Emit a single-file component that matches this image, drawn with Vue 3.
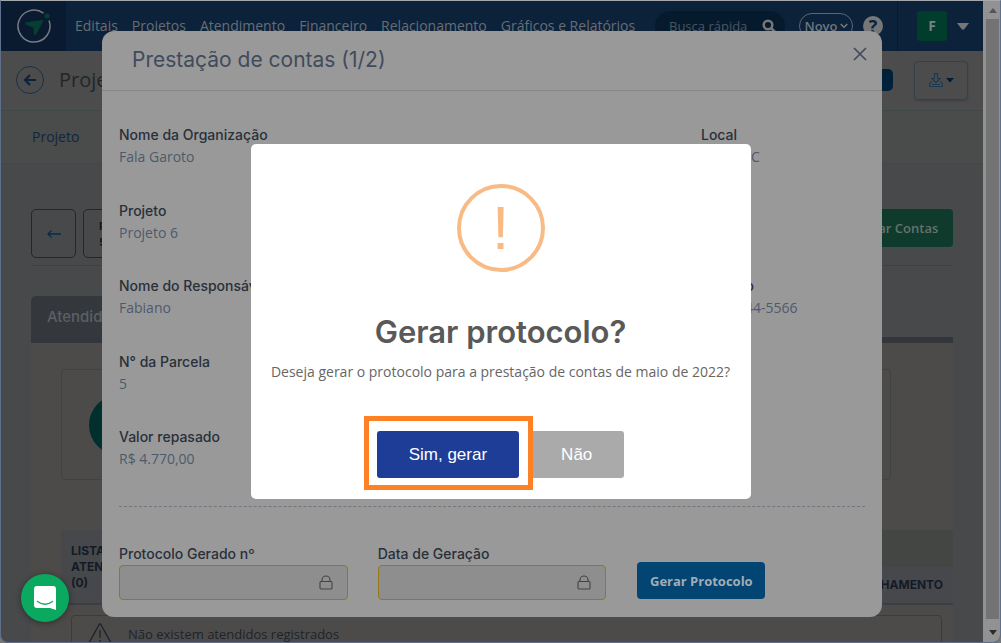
<script setup>
const menu = ['Editais', 'Projetos', 'Atendimento', 'Financeiro', 'Relacionamento', 'Gráficos e Relatórios']

const details = [
  [{ label: 'Nome da Organização', value: 'Fala Garoto' }, { label: 'Local', value: 'Lages/SC' }],
  [{ label: 'Projeto', value: 'Projeto 6' }],
  [{ label: 'Nome do Responsável', value: 'Fabiano' }, { label: 'Contato', value: '(11) 3344-5566' }],
  [{ label: 'N° da Parcela', value: '5' }],
  [{ label: 'Valor repasado', value: 'R$ 4.770,00' }],
]

const fields = [
  { id: 'protocolo', label: 'Protocolo Gerado nº' },
  { id: 'data', label: 'Data de Geração' },
]
</script>

<template>
  <div class="window">
    <div class="page">
      <header class="topbar">
        <a href="#" class="logo" aria-label="Início">
          <svg width="36" height="36" viewBox="0 0 36 36">
            <path d="M27.5 5.2A16 16 0 1 0 33 12.500" fill="none" stroke="#777b80" stroke-width="1.500" />
            <path d="M9.500 14.500 26 12Q27.500 12 27 13.500L20 26.500Q18.500 28 18 26L17.500 19.500 11 17Q8.500 16 9.500 14.500Z" fill="#063f31" />
            <circle cx="31" cy="8" r="2.500" fill="#063f31" />
          </svg>
        </a>
        <nav class="menu">
          <a v-for="item in menu" :key="item" href="#">{{ item }}</a>
        </nav>
        <div class="search">
          <input type="text" placeholder="Busca rápida" aria-label="Busca rápida" />
          <svg width="14" height="14" viewBox="0 0 14 14" fill="none" stroke="#777" stroke-width="2.500">
            <circle cx="6" cy="6" r="4.300" />
            <path d="M9 9l4 4" />
          </svg>
        </div>
        <button class="new">Novo
          <svg width="8" height="6" viewBox="0 0 8 6" fill="none" stroke="#777" stroke-width="1.500"><path d="M.7 1 4 4.300 7.300 1" /></svg>
        </button>
        <button class="help">?</button>
        <div class="account">
          <span class="avatar">F</span>
          <svg width="12" height="7" viewBox="0 0 12 7"><path d="M0 0h12L7 6.500H5Z" fill="#777" /></svg>
        </div>
      </header>

      <div class="titlebar">
        <button class="back" aria-label="Voltar">
          <svg width="14" height="12" viewBox="0 0 14 12" fill="none" stroke="#0c223b" stroke-width="2.200"><path d="M13 6H2M7 1 2 6l5 5" /></svg>
        </button>
        <h1>Projeto</h1>
        <span class="status"></span>
        <button class="download" aria-label="Baixar">
          <svg width="14" height="14" viewBox="0 0 14 14" fill="none" stroke="#1d3853" stroke-width="1.200"><path d="M5.500.5h3v5H11L7 9.500 3 5.500h2.500ZM3.500 9H2L.5 11v2.500h13V11L12 9h-1.500M3 11.500h8" /></svg>
          <svg width="8" height="5" viewBox="0 0 8 5"><path d="M0 0h8L4 4.500Z" fill="#001d38" /></svg>
        </button>
      </div>

      <nav class="tabs"><a href="#">Projeto</a></nav>

      <main class="content">
        <div class="toolbar">
          <button class="tool arrow" aria-label="Anterior">
            <svg width="14" height="8" viewBox="0 0 14 8" fill="none" stroke="#0b2a4b" stroke-width="1.300"><path d="M14 4H1M4.500.5 1 4l3.500 3.500" /></svg>
          </button>
          <button class="tool step">Parcela<br />5</button>
          <button class="report">Prestar Contas</button>
        </div>

        <div class="tabhead"><a href="#">Atendidos</a></div>
        <section class="panel">
          <div class="summary"><span class="dot"></span></div>
          <table>
            <tbody>
              <tr>
                <th rowspan="2" class="list">LISTA DE<br />ATENDIDOS<br />(0)</th>
                <th class="band"></th>
              </tr>
              <tr><th class="follow">ACOMPANHAMENTO</th></tr>
            </tbody>
          </table>
          <div class="empty">
            <svg width="24" height="22" viewBox="0 0 24 22" fill="none" stroke="#1d222a" stroke-width="1.300"><path d="M12 1Q12.700 1 13 1.700L23 20Q23 21 22 21H2Q1 21 1 20L11 1.700Q11.300 1 12 1ZM12 7v8M12 17v2" /></svg>
            Não existem atendidos registrados
          </div>
        </section>
      </main>
    </div>

    <div class="scrollbar">
      <svg width="8" height="5" viewBox="0 0 8 5"><path d="M4 0l4 5H0Z" fill="#555" /></svg>
      <span class="thumb"></span>
      <svg width="8" height="5" viewBox="0 0 8 5"><path d="M0 0h8L4 5Z" fill="#2b2b2b" /></svg>
    </div>

    <div class="modal-layer">
      <section class="modal">
        <header class="modal-head">
          <h2>Prestação de contas (1/2)</h2>
          <button class="close" aria-label="Fechar">
            <svg width="14" height="14" viewBox="0 0 14 14" fill="none" stroke="#414b5c" stroke-width="1.700"><path d="M1 1l12 12M13 1 1 13" /></svg>
          </button>
        </header>
        <div class="modal-body">
          <div class="details">
            <div v-for="(row, i) in details" :key="i" class="row">
              <dl v-for="d in row" :key="d.label">
                <dt>{{ d.label }}</dt>
                <dd>{{ d.value }}</dd>
              </dl>
            </div>
          </div>
          <hr />
          <form class="protocol" @submit.prevent>
            <div v-for="f in fields" :key="f.id" class="field">
              <label :for="f.id">{{ f.label }}</label>
              <div class="box">
                <input :id="f.id" type="text" readonly />
                <svg width="14" height="15" viewBox="0 0 14 15" fill="none" stroke="#444" stroke-width="1.100"><rect x="1" y="6.500" width="12" height="7.500" rx="1" /><path d="M3 6.500V5a4 4 0 0 1 8 0v1.500" /></svg>
              </div>
            </div>
            <div class="field action"><button class="generate" type="button">Gerar Protocolo</button></div>
          </form>
        </div>
      </section>
    </div>

    <div class="alert-layer">
      <section class="alert" role="alertdialog" aria-labelledby="alert-title">
        <div class="mark">!</div>
        <h2 id="alert-title">Gerar protocolo?</h2>
        <p>Deseja gerar o protocolo para a prestação de contas de maio de 2022?</p>
        <div class="choices">
          <div class="highlight"><button class="yes">Sim, gerar</button></div>
          <button class="no">Não</button>
        </div>
      </section>
    </div>

    <button class="chat" aria-label="Abrir chat">
      <svg width="22" height="24" viewBox="0 0 22 24"><path d="M3 0h16q3 0 3 3v21l-6-2H3q-3 0-3-3V3q0-3 3-3Z" fill="#fff" /><path d="M3.500 15.500q7.500 5.500 15 0" fill="none" stroke="#0ba95f" stroke-width="1.300" stroke-linecap="round" /></svg>
    </button>
  </div>
</template>

<style>
body {
  margin: 0;
  background: #777;
}
</style>

<style scoped>
* {
  box-sizing: border-box;
}
a {
  color: inherit;
  text-decoration: none;
}
button {
  font: inherit;
  padding: 0;
  border: 0;
}
h1, h2, p, dl, dd {
  margin: 0;
}
svg {
  flex: none;
}
.window {
  position: relative;
  display: grid;
  grid-template-columns: minmax(0, 1fr) 17px;
  height: 100vh;
  overflow: hidden;
  border: 1px solid #5e6f8c;
  border-top-color: #a4a8ab;
  border-radius: 0 0 8px 8px;
  background: #48494b;
  font: 14px/20px "Open Sans", "Noto Sans", sans-serif;
}
.page {
  overflow: hidden;
}
.topbar {
  display: flex;
  align-items: center;
  height: 50px;
  background: #0c223b;
  color: #686d72;
}
.logo {
  display: flex;
  align-items: center;
  justify-content: center;
  align-self: stretch;
  width: 65px;
  background: #0a1b31;
}
.menu {
  display: flex;
  gap: 14px;
  padding-left: 9px;
  white-space: nowrap;
}
.search {
  display: flex;
  align-items: center;
  width: 130px;
  height: 30px;
  margin-left: auto;
  padding: 0 9px 0 14px;
  border-radius: 15px;
  background: #061a2e;
}
.search input {
  flex: 1;
  min-width: 0;
  padding: 0;
  border: 0;
  background: none;
  font: inherit;
  font-size: 13px;
}
.search input::placeholder {
  color: #4a5662;
  opacity: 1;
}
.new {
  display: flex;
  align-items: center;
  justify-content: center;
  gap: 2px;
  width: 54px;
  height: 26px;
  margin: 0 10px 0 14px;
  border: 1px solid #5d6670;
  border-radius: 13px;
  background: none;
  color: #70757a;
  font-size: 13px;
  font-weight: 600;
}
.help {
  width: 20px;
  height: 20px;
  margin-right: 14px;
  border-radius: 50%;
  background: #777;
  color: #0c223b;
  font-size: 18px;
  font-weight: 700;
}
.account {
  display: flex;
  align-items: center;
  gap: 10px;
  align-self: stretch;
  padding: 0 14px 0 19px;
  border-left: 1px solid #081a2e;
}
.avatar {
  width: 30px;
  height: 30px;
  border-radius: 3px;
  background: #003d2c;
  color: #75837c;
  font-weight: 700;
  line-height: 30px;
  text-align: center;
}
.titlebar {
  display: flex;
  align-items: center;
  height: 60px;
  padding: 0 15px 1px;
  border-bottom: 1px solid #40484a;
  background: #4c4c4c;
}
.back {
  display: flex;
  align-items: center;
  justify-content: center;
  width: 28px;
  height: 28px;
  border: 1px solid #17304b;
  border-radius: 50%;
  background: none;
}
h1 {
  margin-left: 15px;
  color: #22262b;
  font-size: 20px;
  font-weight: 400;
}
.status {
  width: 80px;
  height: 22px;
  margin: 0 21px 0 auto;
  border-radius: 5px;
  background: #00213a;
}
.download {
  display: flex;
  align-items: center;
  justify-content: center;
  gap: 3px;
  width: 54px;
  height: 39px;
  border: 1px solid #35404c;
  border-radius: 4px;
  background: none;
  box-shadow: 0 1px 2px #3b3f44;
}
.tabs {
  height: 53px;
  padding: 16px 31px;
  border-bottom: 1px solid #40484a;
  background: #4a4b4b;
  color: #10263e;
}
.content {
  padding: 45px 30px 0;
}
.toolbar {
  display: flex;
  align-items: flex-start;
  gap: 7px;
  height: 57px;
  border-bottom: 1px solid #3b4346;
}
.tool {
  display: flex;
  align-items: center;
  justify-content: center;
  width: 45px;
  height: 49px;
  border: 1px solid #23272d;
  border-radius: 5px;
  background: none;
}
.step {
  width: 80px;
  padding-left: 15px;
  justify-content: flex-start;
  color: #14171b;
  font: 700 11px/16px Inter, sans-serif;
  text-align: left;
}
.report {
  width: 122px;
  height: 38px;
  margin-left: auto;
  border-radius: 4px;
  background: #0f3b2c;
  color: #66716c;
  font-size: 13px;
  font-weight: 600;
}
.tabhead {
  display: flex;
  margin-top: 30px;
  border-bottom: 6px solid #34363d;
}
.tabhead a {
  width: 130px;
  height: 41px;
  padding: 11px 16px;
  border-radius: 5px 0 0;
  background: #34383d;
  color: #5c5f63;
  font: 500 15px/20px Inter, sans-serif;
}
.panel {
  padding-top: 26px;
  background: #4c4b4a;
}
.summary {
  height: 111px;
  margin: 0 62px 0 30px;
  padding: 25px 27px;
  border: 1px solid #3d4442;
  border-radius: 4px;
}
.dot {
  display: block;
  width: 60px;
  height: 60px;
  border-radius: 50%;
  background: #00302d;
}
table {
  width: calc(100% - 30px);
  margin: 50px 0 0 30px;
  border-collapse: collapse;
  border-bottom: 2px solid #3a3f42;
  color: #141b26;
  font: 700 12px/16px Inter, sans-serif;
}
th {
  height: 37px;
  padding: 0 10px;
  background: #46484b;
}
.list {
  text-align: left;
}
.band {
  background: #444644;
}
.follow {
  text-align: right;
}
.empty {
  display: flex;
  align-items: center;
  gap: 16px;
  height: 38px;
  margin: 10px 11px 0 40px;
  padding-left: 16px;
  border: 1px solid #393c3e;
  border-radius: 4px;
  color: #1e232a;
  font-size: 13px;
}
.scrollbar {
  display: flex;
  flex-direction: column;
  align-items: center;
  padding: 7px 2px;
  gap: 6px;
  border-left: 2px solid #929292;
  background: #929292;
}
.thumb {
  flex: 1;
  width: 13px;
  margin-bottom: 5px;
  background: #737373;
}
.modal-layer {
  position: absolute;
  inset: 30px 17px auto 0;
  display: flex;
  justify-content: center;
}
.modal {
  width: 780px;
  border-radius: 12px;
  background: #999;
  color: #293039;
}
.modal-head {
  display: flex;
  align-items: center;
  justify-content: space-between;
  height: 60px;
  padding: 0 14px 2px 30px;
  border-bottom: 1px solid #868686;
}
.modal-head h2 {
  color: #414b5c;
  font: 400 21px/28px Inter, sans-serif;
}
.close {
  display: flex;
  padding: 1px;
  margin-bottom: 12px;
  background: none;
}
.modal-body {
  padding: 34px 2px 17px;
}
.details {
  display: grid;
  grid-auto-rows: 1fr;
  min-height: 378px;
}
.row {
  display: grid;
  grid-template-columns: 3fr 1fr;
}
dl {
  padding: 0 15px;
}
dt,
label {
  display: block;
  font: 500 14px/20px Inter, sans-serif;
}
dd {
  padding-top: 2px;
  color: #4e596c;
}
hr {
  height: 0;
  margin: 3px 15px 37px;
  border: 0;
  border-top: 1px dashed #717680;
}
.protocol {
  display: grid;
  grid-template-columns: repeat(3, 1fr);
}
.field {
  padding: 0 15px;
}
.box {
  display: flex;
  align-items: center;
  height: 35px;
  margin-top: 1px;
  padding-right: 14px;
  border: 1px solid #947718;
  border-radius: 4px;
  background: #8e8e8e;
}
.box input {
  flex: 1;
  min-width: 0;
  height: 100%;
  padding: 0 10px;
  border: 0;
  background: none;
  font: inherit;
}
.action {
  padding-left: 16px;
}
.generate {
  width: 128px;
  height: 37px;
  margin-top: 18px;
  border-radius: 4px;
  background: #024472;
  color: #a3adb5;
  font-size: 13px;
  font-weight: 700;
}
.alert-layer {
  position: absolute;
  inset: 0;
  display: flex;
  align-items: center;
  justify-content: center;
}
.alert {
  display: flex;
  flex-direction: column;
  align-items: center;
  width: 500px;
  padding: 40px 10px 21px;
  border-radius: 5px;
  background: #fff;
  color: #666;
}
.mark {
  width: 88px;
  height: 88px;
  border: 4px solid #f8bb86;
  border-radius: 50%;
  color: #f8bb86;
  font: 62px/80px "Liberation Sans", Arial, sans-serif;
  text-align: center;
}
.alert h2 {
  margin-top: 40px;
  color: #595959;
  font: 600 31px/40px Inter, sans-serif;
}
.alert p {
  margin-top: 10px;
}
.choices {
  display: flex;
  gap: 10px;
  margin-top: 49px;
}
.choices button {
  height: 47px;
  padding: 0 32px;
  border-radius: 3px;
  background: #aaa;
  color: #fff;
  font: 17px/20px "Liberation Sans", Arial, sans-serif;
}
.choices .yes {
  background: #1e3d96;
}
.highlight {
  position: relative;
}
.highlight::after {
  content: "";
  position: absolute;
  inset: -15px -14px -12px -13px;
  border: 5px solid #ff8126;
  box-shadow: inset 0 0 0 4px #fff;
}
.chat {
  position: absolute;
  left: 20px;
  bottom: 20px;
  display: flex;
  align-items: center;
  justify-content: center;
  width: 48px;
  height: 48px;
  border-radius: 50%;
  background: #0ba95f;
  box-shadow: 0 1px 6px #0006;
}
</style>
